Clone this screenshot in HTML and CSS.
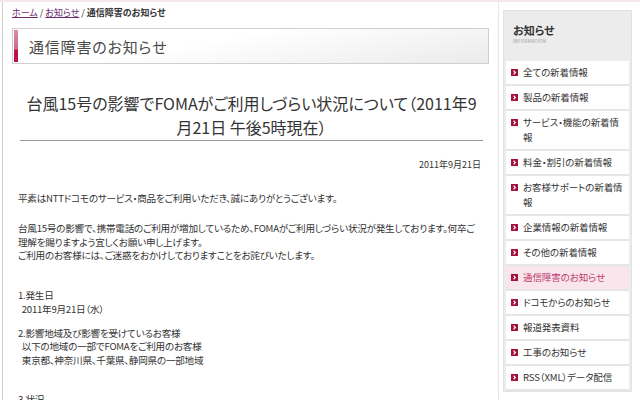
FILE: index.html
```html
<!DOCTYPE html>
<html lang="ja">

<head>
    <meta charset="UTF-8">
    <title>通信障害のお知らせ</title>
    <link rel="stylesheet" href="styles.css">
</head>

<body>
    <div class="page">
        <div class="main">
            <p class="crumbs">
                <a href="#">ホーム</a> / <a href="#">お知らせ</a> / <span>通信障害のお知らせ</span>
            </p>
            <h1 class="title"><span class="mark"></span>通信障害のお知らせ</h1>

            <h2 class="headline">台風15号の影響でFOMAがご利用しづらい状況について（2011年9<br>月21日 午後5時現在）</h2>
            <p class="date">2011年9月21日</p>

            <div class="text">
                <p class="p1">平素はNTTドコモのサービス・商品をご利用いただき、誠にありがとうございます。</p>
                <p class="p2">台風15号の影響で、携帯電話のご利用が増加しているため、FOMAがご利用しづらい状況が発生しております。何卒ご<br>理解を賜りますよう宜しくお願い申し上げます。<br>ご利用のお客様には、ご迷惑をおかけしておりますことをお詫びいたします。</p>
                <p class="p3">1.発生日<br>&nbsp;&nbsp;2011年9月21日（水）</p>
                <p class="p4">2.影響地域及び影響を受けているお客様<br>&nbsp;&nbsp;以下の地域の一部でFOMAをご利用のお客様<br>&nbsp;&nbsp;東京都、神奈川県、千葉県、静岡県の一部地域</p>
                <p>3.状況</p>
            </div>
        </div>

        <div class="side">
            <div class="panel">
                <div class="panel-head">
                    <div class="panel-title">お知らせ</div>
                    <div class="panel-sub">INFORMATION</div>
                </div>
                <ul class="menu">
                    <li><a href="#"><svg viewBox="0 0 8 8"><rect width="8" height="8" fill="#a3123f"/><path d="M3 2 L5 4 L3 6" fill="none" stroke="#fff" stroke-width="1.3"/></svg>全ての新着情報</a></li>
                    <li><a href="#"><svg viewBox="0 0 8 8"><rect width="8" height="8" fill="#a3123f"/><path d="M3 2 L5 4 L3 6" fill="none" stroke="#fff" stroke-width="1.3"/></svg>製品の新着情報</a></li>
                    <li><a href="#"><svg viewBox="0 0 8 8"><rect width="8" height="8" fill="#a3123f"/><path d="M3 2 L5 4 L3 6" fill="none" stroke="#fff" stroke-width="1.3"/></svg>サービス・機能の新着情報</a></li>
                    <li><a href="#"><svg viewBox="0 0 8 8"><rect width="8" height="8" fill="#a3123f"/><path d="M3 2 L5 4 L3 6" fill="none" stroke="#fff" stroke-width="1.3"/></svg>料金・割引の新着情報</a></li>
                    <li><a href="#"><svg viewBox="0 0 8 8"><rect width="8" height="8" fill="#a3123f"/><path d="M3 2 L5 4 L3 6" fill="none" stroke="#fff" stroke-width="1.3"/></svg>お客様サポートの新着情報</a></li>
                    <li><a href="#"><svg viewBox="0 0 8 8"><rect width="8" height="8" fill="#a3123f"/><path d="M3 2 L5 4 L3 6" fill="none" stroke="#fff" stroke-width="1.3"/></svg>企業情報の新着情報</a></li>
                    <li><a href="#"><svg viewBox="0 0 8 8"><rect width="8" height="8" fill="#a3123f"/><path d="M3 2 L5 4 L3 6" fill="none" stroke="#fff" stroke-width="1.3"/></svg>その他の新着情報</a></li>
                    <li class="active"><a href="#"><svg viewBox="0 0 8 8"><rect width="8" height="8" fill="#a3123f"/><path d="M3 2 L5 4 L3 6" fill="none" stroke="#fff" stroke-width="1.3"/></svg>通信障害のお知らせ</a></li>
                    <li><a href="#"><svg viewBox="0 0 8 8"><rect width="8" height="8" fill="#a3123f"/><path d="M3 2 L5 4 L3 6" fill="none" stroke="#fff" stroke-width="1.3"/></svg>ドコモからのお知らせ</a></li>
                    <li><a href="#"><svg viewBox="0 0 8 8"><rect width="8" height="8" fill="#a3123f"/><path d="M3 2 L5 4 L3 6" fill="none" stroke="#fff" stroke-width="1.3"/></svg>報道発表資料</a></li>
                    <li><a href="#"><svg viewBox="0 0 8 8"><rect width="8" height="8" fill="#a3123f"/><path d="M3 2 L5 4 L3 6" fill="none" stroke="#fff" stroke-width="1.3"/></svg>工事のお知らせ</a></li>
                    <li><a href="#"><svg viewBox="0 0 8 8"><rect width="8" height="8" fill="#a3123f"/><path d="M3 2 L5 4 L3 6" fill="none" stroke="#fff" stroke-width="1.3"/></svg>RSS（XML）データ配信</a></li>
                </ul>
            </div>
        </div>
    </div>
</body>

</html>
```

FILE: styles.css
```css
body,
p,
h1,
h2,
ul,
li {
    margin: 0;
    padding: 0;
    list-style: none;
}

body {
    font-family: "Noto Sans CJK JP", "Noto Sans", sans-serif;
    font-feature-settings: "palt";
    color: #333;
    background: #fff;
    border-top: 2px solid #f4e8ec;
    height: 398px;
    overflow: hidden;
}

a {
    color: #333;
    text-decoration: none;
}

.page {
    display: flex;
    padding-left: 2px;
}

.main {
    width: 495px;
    min-height: 400px;
    border-left: 1px solid #cfcfcf;
    border-right: 1px solid #e6e6e6;
}

.crumbs {
    font-size: 9px;
    line-height: 12px;
    padding: 5px 9px 9px;
    color: #333;
}

.crumbs a {
    color: #6e2a6e;
    text-decoration: underline;
}

.crumbs span {
    font-weight: bold;
}

.title {
    display: flex;
    align-items: center;
    margin: 0 9px;
    height: 32px;
    padding: 1px;
    border: 1px solid #cfcfcf;
    background: linear-gradient(170deg, #ffffff 40%, #ebebeb 100%);
    font-size: 15px;
    font-weight: normal;
    letter-spacing: 0.8px;
    color: #4a4a4a;
}

.mark {
    width: 4px;
    align-self: stretch;
    margin-right: 11px;
    background: linear-gradient(#de8aa3 0%, #d0678a 60%, #c0124a 62%, #c0124a 100%);
}

.headline {
    font-size: 16px;
    font-weight: normal;
    line-height: 24px;
    text-align: center;
    color: #333;
    margin: 27px 15px 0 17px;
    padding-bottom: 1px;
    border-bottom: 1px solid #999;
}

.date {
    font-size: 9px;
    line-height: 12px;
    text-align: right;
    padding: 18px 17px 0;
}

.text {
    font-size: 9.6px;
    line-height: 13.5px;
    letter-spacing: -0.25px;
    padding: 21px 6px 0 15px;
}

.text .p1 {
    margin-bottom: 16.5px;
}

.text .p2 {
    margin-bottom: 26.5px;
}

.text .p3 {
    margin-bottom: 10.5px;
}

.text .p4 {
    margin-bottom: 25.5px;
}

.side {
    flex: 1;
    padding: 8px 8px 0 4px;
}

.panel {
    background: #ececec;
    border: 1px solid #e2e2e2;
    padding: 0 2px;
}

.panel-head {
    padding: 12px 7px 16px;
}

.panel-title {
    font-size: 11px;
    font-weight: bold;
    line-height: 14px;
    color: #333;
}

.panel-sub {
    font-size: 4.5px;
    line-height: 8px;
    color: #999;
    letter-spacing: 0.3px;
}

.menu li {
    background: #fff;
    border-bottom: 2px solid #e6e6e6;
}

.menu li a {
    display: flex;
    align-items: flex-start;
    padding: 4px 6px 4px 5px;
    font-size: 9.5px;
    line-height: 15px;
    letter-spacing: -0.1px;
    color: #333;
}

.menu li svg {
    width: 7px;
    height: 7px;
    flex: none;
    margin: 4px 5px 0 0;
}

.menu li.active {
    background: #f8e6ec;
}

.menu li.active a {
    color: #c23a6c;
}
```
